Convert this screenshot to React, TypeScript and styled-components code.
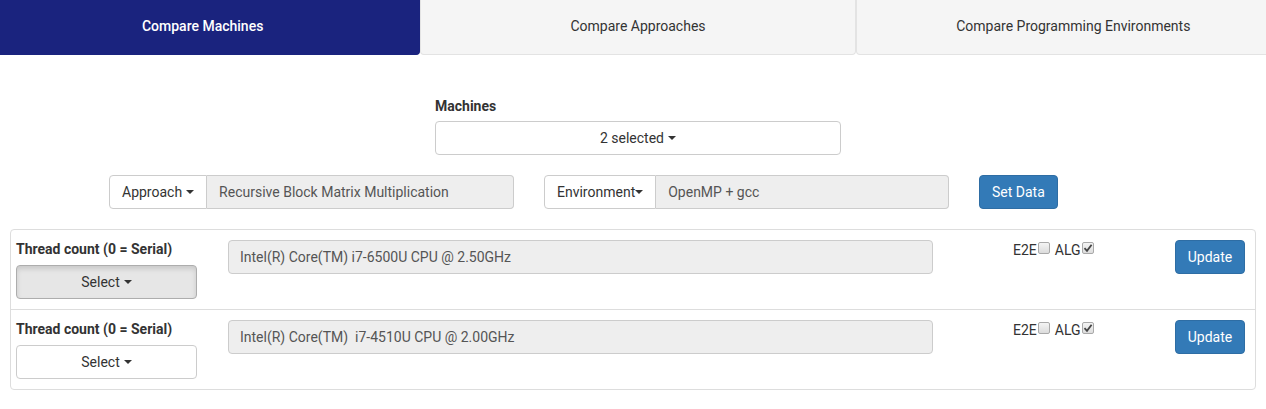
import React from "react";
import styled, { createGlobalStyle, css } from "styled-components";

const Global = createGlobalStyle`
  html, body { margin: 0; padding: 0; background: #fff; }
  body {
    font-family: Roboto, "Helvetica Neue", Arial, sans-serif;
    font-size: 14px;
    line-height: 20px;
    color: #333;
    overflow-x: hidden;
  }
  * { box-sizing: border-box; }
`;

const Page = styled.div`
  display: flex;
  flex-direction: column;
  padding-bottom: 19px;
`;

const TabStrip = styled.div`
  overflow: hidden;
`;

const TabBar = styled.nav`
  display: flex;
  width: calc(100% + 40px);
  margin-left: -15px;
`;

const Tab = styled.div<{ $active?: boolean }>`
  flex: 1 1 0;
  text-align: center;
  padding: 16px 0 18px;
  border: 1px solid #e3e3e3;
  border-top: none;
  border-radius: 0 0 4px 4px;
  background: #f5f5f5;
  color: #333;
  cursor: pointer;
  ${(p) =>
    p.$active &&
    css`
      background: #1a237e;
      border-color: #1a237e;
      color: #fff;
      font-weight: 500;
    `}
`;

const MachinesBlock = styled.div`
  display: flex;
  flex-direction: column;
  width: 406px;
  margin: 41px 0 0 435px;
`;

const Label = styled.label`
  display: block;
  font-weight: 700;
  margin-bottom: 5px;
`;

const Caret = styled.span<{ $tight?: boolean }>`
  display: inline-block;
  width: 0;
  height: 0;
  margin-left: ${(p) => (p.$tight ? "0" : "4px")};
  vertical-align: middle;
  border-top: 4px solid #333;
  border-right: 4px solid transparent;
  border-left: 4px solid transparent;
  position: relative;
  top: -1px;
`;

const DropButton = styled.button<{ $active?: boolean }>`
  display: block;
  width: 100%;
  height: 34px;
  padding: 6px 12px;
  font: inherit;
  color: #333;
  background: #fff;
  border: 1px solid #ccc;
  border-radius: 4px;
  text-align: center;
  cursor: pointer;
  ${(p) =>
    p.$active &&
    css`
      background: #e6e6e6;
      border-color: #adadad;
      box-shadow: inset 0 3px 5px rgba(0, 0, 0, 0.125);
    `}
`;

const FilterRow = styled.div`
  display: grid;
  grid-template-columns: 405px 405px 78px;
  column-gap: 30px;
  margin: 20px 0 0 109px;
  align-items: start;
`;

const InputGroup = styled.div`
  display: flex;
  height: 34px;
`;

const GroupButton = styled.button`
  flex: none;
  height: 34px;
  padding: 6px 12px;
  font: inherit;
  color: #333;
  background: #fff;
  border: 1px solid #ccc;
  border-radius: 4px 0 0 4px;
  white-space: nowrap;
  cursor: pointer;
`;

const ReadOnlyField = styled.div<{ $grouped?: boolean }>`
  height: 34px;
  padding: 6px 11px;
  color: #555;
  background: #eee;
  border: 1px solid #ccc;
  border-radius: 4px;
  white-space: pre;
  overflow: hidden;
  ${(p) =>
    p.$grouped &&
    css`
      flex: 1 1 auto;
      border-left: none;
      border-radius: 0 4px 4px 0;
      padding-left: 12px;
    `}
`;

const PrimaryButton = styled.button`
  height: 34px;
  padding: 6px 12px;
  font: inherit;
  color: #fff;
  background: #337ab7;
  border: 1px solid #2e6da4;
  border-radius: 4px;
  white-space: nowrap;
  cursor: pointer;
  justify-self: start;
`;

const Panel = styled.section`
  margin: 20px 10px 0;
  border: 1px solid #ddd;
  border-radius: 4px;
  display: flex;
  flex-direction: column;
`;

const MachineRow = styled.div`
  display: grid;
  grid-template-columns: 212px 785px 162px 70px;
  align-items: start;
  height: 79px;
  padding: 9px 0 0 5px;
  & + & {
    height: 80px;
    border-top: 1px solid #ddd;
  }
`;

const ThreadCell = styled.div`
  display: flex;
  flex-direction: column;
  width: 181px;
`;

const ThreadLabel = styled(Label)`
  margin-bottom: 6px;
`;

const CpuField = styled(ReadOnlyField)`
  width: 705px;
  margin-top: 1px;
`;

const CheckCell = styled.div`
  display: flex;
  align-items: center;
  margin-top: 1px;
  height: 20px;
`;

const CheckLabel = styled.span`
  margin-right: 1px;
`;

const Box = styled.span<{ $gap?: number }>`
  display: inline-flex;
  align-items: center;
  justify-content: center;
  width: 12px;
  height: 12px;
  margin: 0 ${(p) => p.$gap ?? 4}px 0 0;
  border: 1px solid #a9a9a9;
  border-radius: 2px;
  background: linear-gradient(#f4f4f4, #dcdcdc);
  position: relative;
  top: -2px;
`;

const UpdateButton = styled(PrimaryButton)`
  width: 70px;
  margin-top: 1px;
  padding: 6px 0;
`;

function CheckBox({ checked, gap }: { checked?: boolean; gap?: number }) {
  return (
    <Box $gap={gap}>
      {checked && (
        <svg width="10" height="10" viewBox="0 0 10 10">
          <path d="M1.5 5.2 L4 7.8 L8.6 1.8" fill="none" stroke="#444" strokeWidth="1.8" />
        </svg>
      )}
    </Box>
  );
}

const machines = [
  { cpu: "Intel(R) Core(TM) i7-6500U CPU @ 2.50GHz", active: true },
  { cpu: "Intel(R) Core(TM)  i7-4510U CPU @ 2.00GHz", active: false },
];

export default function App() {
  return (
    <>
      <Global />
      <Page>
        <TabStrip>
          <TabBar>
            <Tab $active>Compare Machines</Tab>
            <Tab>Compare Approaches</Tab>
            <Tab>Compare Programming Environments</Tab>
          </TabBar>
        </TabStrip>

        <MachinesBlock>
          <Label>Machines</Label>
          <DropButton>
            2 selected<Caret />
          </DropButton>
        </MachinesBlock>

        <FilterRow>
          <InputGroup>
            <GroupButton>
              Approach<Caret />
            </GroupButton>
            <ReadOnlyField $grouped>Recursive Block Matrix Multiplication</ReadOnlyField>
          </InputGroup>
          <InputGroup>
            <GroupButton>
              Environment<Caret $tight />
            </GroupButton>
            <ReadOnlyField $grouped>OpenMP + gcc</ReadOnlyField>
          </InputGroup>
          <PrimaryButton>Set Data</PrimaryButton>
        </FilterRow>

        <Panel>
          {machines.map((m, i) => (
            <MachineRow key={i}>
              <ThreadCell>
                <ThreadLabel>Thread count (0 = Serial)</ThreadLabel>
                <DropButton $active={m.active}>
                  Select<Caret />
                </DropButton>
              </ThreadCell>
              <CpuField>{m.cpu}</CpuField>
              <CheckCell>
                <CheckLabel>E2E</CheckLabel>
                <CheckBox gap={5} />
                <CheckLabel>ALG</CheckLabel>
                <CheckBox checked gap={0} />
              </CheckCell>
              <UpdateButton>Update</UpdateButton>
            </MachineRow>
          ))}
        </Panel>
      </Page>
    </>
  );
}
